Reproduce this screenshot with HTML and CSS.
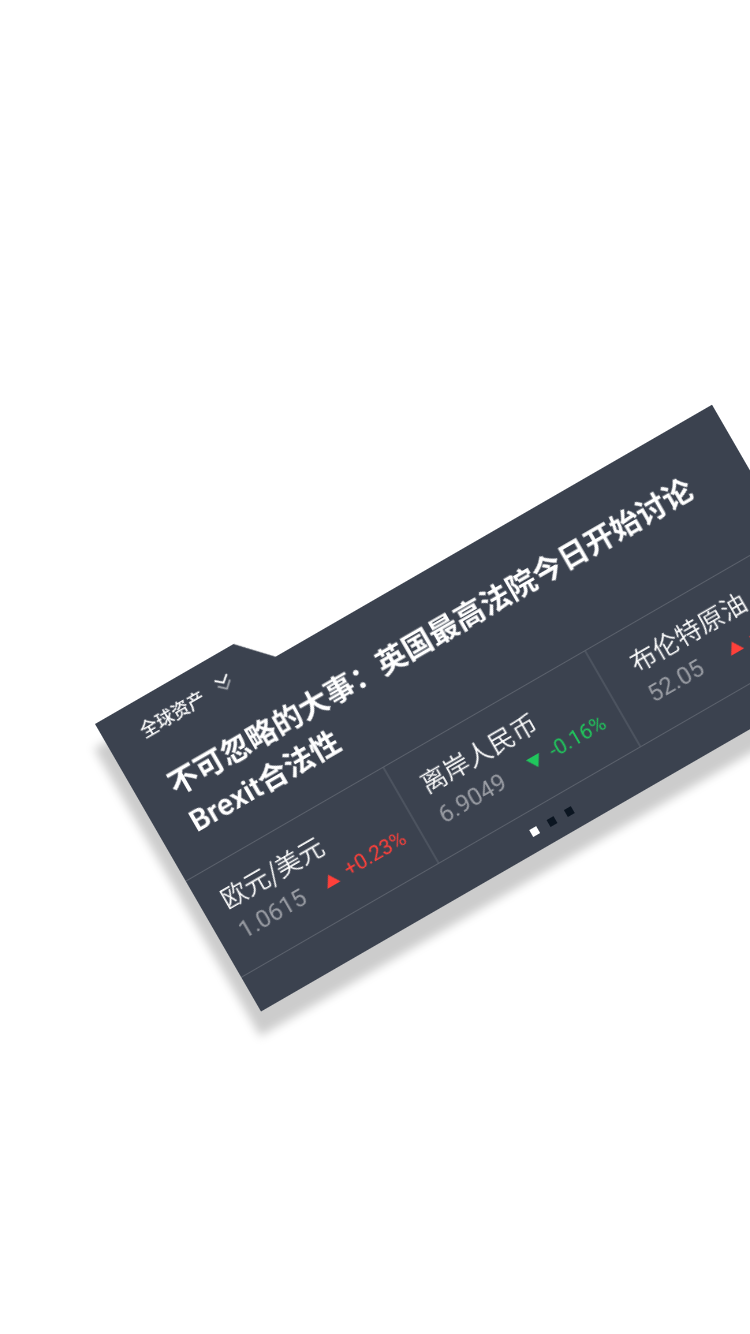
FILE: index.html
```html
<!DOCTYPE html>
<html lang="zh-CN">
<head>
<meta charset="utf-8">
<meta name="viewport" content="width=device-width, initial-scale=1">
<title>全球资产</title>
<link rel="stylesheet" href="styles.css">
</head>
<body>
<main class="stage">
  <article class="folder">
    <div class="card">
      <button class="tab" type="button">
        <span>全球资产</span>
        <svg class="chevrons" width="16" height="16" viewBox="0 0 16 16" fill="none" stroke="#fff" stroke-width="2" aria-hidden="true">
          <path d="M1 1.500L8 7.500L15 1.500"/>
          <path d="M1 8L8 14.500L15 8" opacity=".5"/>
        </svg>
      </button>
      <h1 class="headline">不可忽略的大事：英国最高法院今日开始讨论Brexit合法性</h1>
      <ul class="tickers">
        <li class="ticker">
          <h2 class="name">欧元/美元</h2>
          <div class="quote">
            <span class="price">1.0615</span>
            <span class="change up"><svg width="15" height="12" viewBox="0 0 15 12" aria-hidden="true"><path d="M0 12L7.500 0L15 12Z" fill="currentColor"/></svg>+0.23%</span>
          </div>
        </li>
        <li class="ticker">
          <h2 class="name">离岸人民币</h2>
          <div class="quote">
            <span class="price">6.9049</span>
            <span class="change down"><svg width="15" height="12" viewBox="0 0 15 12" aria-hidden="true"><path d="M0 0L7.500 12L15 0Z" fill="currentColor"/></svg>-0.16%</span>
          </div>
        </li>
        <li class="ticker">
          <h2 class="name">布伦特原油</h2>
          <div class="quote">
            <span class="price">52.05</span>
            <span class="change up"><svg width="15" height="12" viewBox="0 0 15 12" aria-hidden="true"><path d="M0 12L7.500 0L15 12Z" fill="currentColor"/></svg>+0.23%</span>
          </div>
        </li>
      </ul>
      <nav class="pager" aria-label="分页">
        <button class="dot current" type="button" aria-label="1"></button>
        <button class="dot" type="button" aria-label="2"></button>
        <button class="dot" type="button" aria-label="3"></button>
      </nav>
    </div>
  </article>
</main>
</body>
</html>
```

FILE: styles.css
```css
* {
  box-sizing: border-box;
}

body {
  margin: 0;
  background: #fff;
  color: #fff;
  font-family: Roboto, "Noto Sans CJK SC", sans-serif;
  text-rendering: geometricPrecision;
}

.stage {
  min-height: 100vh;
  padding: 724px 0 0 95px;
  overflow: hidden;
}

.folder {
  width: calc(100vw - 56px);
  transform: rotate(-30deg);
  transform-origin: 0 0;
  filter: drop-shadow(-13px 21px 5px rgba(0, 0, 0, 0.2));
}

.card {
  background: #3b424f;
  clip-path: polygon(0 0, 160px 0, 190px 32px, 100% 32px, 100% 100%, 0 100%);
}

.tab {
  display: flex;
  align-items: center;
  gap: 16px;
  padding: 16px 0 0 36px;
  border: 0;
  background: none;
  color: inherit;
  font: 500 18px/26px "Noto Sans CJK SC", sans-serif;
}

.chevrons {
  display: block;
}

.headline {
  margin: 0;
  padding: 31px 34px 24px;
  font-size: 30px;
  line-height: 42px;
  font-weight: 600;
}

.tickers {
  display: grid;
  grid-template-columns: 33fr 34fr 34fr;
  margin: 0;
  padding: 0;
  list-style: none;
  border-top: 1px solid #5b616c;
  border-bottom: 1px solid #5b616c;
}

.ticker {
  padding: 17px 15px 21px 22px;
}

.ticker + .ticker {
  padding: 17px 18px 21px 24px;
  border-left: 2px solid #4c535f;
}

.ticker:last-child {
  padding-right: 16px;
  padding-left: 32px;
}

.name {
  margin: 0;
  font: 350 26px/36px "Noto Sans CJK SC", sans-serif;
}

.quote {
  display: flex;
  align-items: center;
  justify-content: space-between;
  line-height: 36px;
}

.price {
  color: #9a9da4;
  font-size: 24px;
}

.change {
  display: flex;
  align-items: center;
  gap: 10px;
  font-size: 21px;
}

.up {
  color: #ff403a;
}

.down {
  color: #20c75c;
}

.pager {
  display: flex;
  justify-content: center;
  gap: 12px;
  padding: 16px 0 15px;
}

.dot {
  width: 8px;
  height: 8px;
  padding: 0;
  border: 0;
  background: #0b1521;
}

.current {
  background: #fff;
}
```
